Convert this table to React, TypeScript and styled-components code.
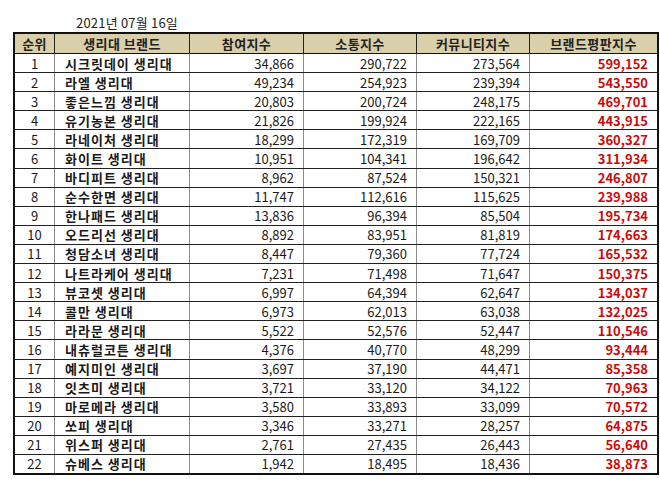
import React from "react";
import styled, { createGlobalStyle } from "styled-components";

const Global = createGlobalStyle`
  html, body { margin: 0; padding: 0; background: #fff; }
  body { font-family: "Noto Sans CJK KR", "Noto Sans", sans-serif; color: #111; }
`;

const Page = styled.div`
  padding: 14px 0 0 13px;
  width: 660px;
  box-sizing: border-box;
`;

const DateLine = styled.div`
  margin-left: 63px;
  font-size: 13px;
  line-height: 18px;
  height: 18px;
  color: #222;
  letter-spacing: 0.2px;
`;

const Table = styled.table`
  border-collapse: collapse;
  border: 2px solid #111;
  table-layout: fixed;
  width: 637px;
  font-size: 13px;
`;

const HeadCell = styled.th<{ $w: number }>`
  width: ${(p) => p.$w}px;
  height: 19px;
  padding: 0;
  background: #d9d0aa;
  border: 1px solid #222;
  border-bottom: 1px solid #111;
  font-weight: 700;
  color: #222;
  text-align: center;
  line-height: 18px;
  letter-spacing: 0.4px;
`;

const Row = styled.tr`
  height: 19.1px;
`;

const Cell = styled.td<{ $align: "center" | "left" | "right"; $bold?: boolean; $red?: boolean }>`
  padding: 0 ${(p) => (p.$align === "right" ? "9px" : "0")} 0 ${(p) => (p.$align === "left" ? "10px" : "0")};
  border-left: 1px solid #8c8c8c;
  border-right: 1px solid #8c8c8c;
  border-bottom: 1px solid #222;
  text-align: ${(p) => p.$align};
  font-weight: ${(p) => (p.$bold ? 700 : 400)};
  color: ${(p) => (p.$red ? "#cc0a0a" : "#1a1a1a")};
  letter-spacing: ${(p) => (p.$align === "left" ? "1px" : "0")};
  line-height: 17px;
  white-space: nowrap;
  overflow: hidden;
`;

const rows: [string, string, string, string, string][] = [
  ["시크릿데이 생리대", "34,866", "290,722", "273,564", "599,152"],
  ["라엘 생리대", "49,234", "254,923", "239,394", "543,550"],
  ["좋은느낌 생리대", "20,803", "200,724", "248,175", "469,701"],
  ["유기농본 생리대", "21,826", "199,924", "222,165", "443,915"],
  ["라네이처 생리대", "18,299", "172,319", "169,709", "360,327"],
  ["화이트 생리대", "10,951", "104,341", "196,642", "311,934"],
  ["바디피트 생리대", "8,962", "87,524", "150,321", "246,807"],
  ["순수한면 생리대", "11,747", "112,616", "115,625", "239,988"],
  ["한나패드 생리대", "13,836", "96,394", "85,504", "195,734"],
  ["오드리선 생리대", "8,892", "83,951", "81,819", "174,663"],
  ["청담소녀 생리대", "8,447", "79,360", "77,724", "165,532"],
  ["나트라케어 생리대", "7,231", "71,498", "71,647", "150,375"],
  ["뷰코셋 생리대", "6,997", "64,394", "62,647", "134,037"],
  ["콜만 생리대", "6,973", "62,013", "63,038", "132,025"],
  ["라라문 생리대", "5,522", "52,576", "52,447", "110,546"],
  ["내츄럴코튼 생리대", "4,376", "40,770", "48,299", "93,444"],
  ["예지미인 생리대", "3,697", "37,190", "44,471", "85,358"],
  ["잇츠미 생리대", "3,721", "33,120", "34,122", "70,963"],
  ["마로메라 생리대", "3,580", "33,893", "33,099", "70,572"],
  ["쏘피 생리대", "3,346", "33,271", "28,257", "64,875"],
  ["위스퍼 생리대", "2,761", "27,435", "26,443", "56,640"],
  ["슈베스 생리대", "1,942", "18,495", "18,436", "38,873"],
];

const heads: [string, number][] = [
  ["순위", 39],
  ["생리대 브랜드", 134],
  ["참여지수", 113],
  ["소통지수", 112],
  ["커뮤니티지수", 112],
  ["브랜드평판지수", 127],
];

export default function App() {
  return (
    <Page>
      <Global />
      <DateLine>2021년 07월 16일</DateLine>
      <Table>
        <thead>
          <tr>
            {heads.map(([h, w]) => (
              <HeadCell key={h} $w={w}>
                {h}
              </HeadCell>
            ))}
          </tr>
        </thead>
        <tbody>
          {rows.map((r, i) => (
            <Row key={r[0]}>
              <Cell $align="center">{i + 1}</Cell>
              <Cell $align="left" $bold>
                {r[0]}
              </Cell>
              <Cell $align="right">{r[1]}</Cell>
              <Cell $align="right">{r[2]}</Cell>
              <Cell $align="right">{r[3]}</Cell>
              <Cell $align="right" $bold $red>
                {r[4]}
              </Cell>
            </Row>
          ))}
        </tbody>
      </Table>
    </Page>
  );
}
